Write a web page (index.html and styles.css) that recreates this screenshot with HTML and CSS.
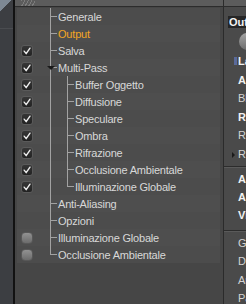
FILE: index.html
```html
<!DOCTYPE html>
<html lang="it">
  <head>
    <meta charset="UTF-8" />
    <title>Render</title>
    <link rel="stylesheet" href="styles.css">
  </head>
  <body>
    <div class="app">
      <!-- barra laterale -->
      <div class="dock"></div>
      <div class="dock-edge"></div>

      <!-- albero delle sezioni -->
      <div class="outline">
        <div class="bar"><span class="grip"></span></div>
        <ul class="tree">
          <li class="row l1"><span class="mark"></span><span class="label">Generale</span></li>
          <li class="row l1 active"><span class="mark"></span><span class="label">Output</span></li>
          <li class="row l1"><span class="mark check"><svg viewBox="0 0 12 12"><path d="M2.6 6.2 L5 9.2 L9.6 2.6" /></svg></span><span class="label">Salva</span></li>
          <li class="row l1"><span class="mark check"><svg viewBox="0 0 12 12"><path d="M2.6 6.2 L5 9.2 L9.6 2.6" /></svg></span><span class="expander"></span><span class="label">Multi-Pass</span></li>
          <li class="row l2"><span class="mark check"><svg viewBox="0 0 12 12"><path d="M2.6 6.2 L5 9.2 L9.6 2.6" /></svg></span><span class="label">Buffer Oggetto</span></li>
          <li class="row l2"><span class="mark check"><svg viewBox="0 0 12 12"><path d="M2.6 6.2 L5 9.2 L9.6 2.6" /></svg></span><span class="label">Diffusione</span></li>
          <li class="row l2"><span class="mark check"><svg viewBox="0 0 12 12"><path d="M2.6 6.2 L5 9.2 L9.6 2.6" /></svg></span><span class="label">Speculare</span></li>
          <li class="row l2"><span class="mark check"><svg viewBox="0 0 12 12"><path d="M2.6 6.2 L5 9.2 L9.6 2.6" /></svg></span><span class="label">Ombra</span></li>
          <li class="row l2"><span class="mark check"><svg viewBox="0 0 12 12"><path d="M2.6 6.2 L5 9.2 L9.6 2.6" /></svg></span><span class="label">Rifrazione</span></li>
          <li class="row l2"><span class="mark check"><svg viewBox="0 0 12 12"><path d="M2.6 6.2 L5 9.2 L9.6 2.6" /></svg></span><span class="label">Occlusione Ambientale</span></li>
          <li class="row l2 last"><span class="mark check"><svg viewBox="0 0 12 12"><path d="M2.6 6.2 L5 9.2 L9.6 2.6" /></svg></span><span class="label">Illuminazione Globale</span></li>
          <li class="row l1"><span class="mark"></span><span class="label">Anti-Aliasing</span></li>
          <li class="row l1"><span class="mark"></span><span class="label">Opzioni</span></li>
          <li class="row l1"><span class="mark off"></span><span class="label">Illuminazione Globale</span></li>
          <li class="row l1 last"><span class="mark off"></span><span class="label">Occlusione Ambientale</span></li>
        </ul>
      </div>

      <!-- pannello proprietà (tagliato) -->
      <div class="props">
        <div class="bar"></div>
        <div class="props-title">Output</div>
        <div class="knob"></div>
        <div class="group first">
          <div class="prop strong"><span class="swatch"></span>Larghezza</div>
          <div class="prop strong">Altezza</div>
          <div class="prop">Blocchi</div>
          <div class="prop strong">Rapporto</div>
          <div class="prop">Risoluzione</div>
          <div class="prop"><span class="arrow"></span>Regione</div>
        </div>
        <div class="sep"></div>
        <div class="group tight">
          <div class="prop strong">Antialias</div>
          <div class="prop strong">Alpha</div>
          <div class="prop strong">Visualizza</div>
        </div>
        <div class="sep lower"></div>
        <div class="group last">
          <div class="prop">Gamma</div>
          <div class="prop">Dither</div>
          <div class="prop">Auto</div>
          <div class="prop">Passi</div>
        </div>
      </div>
    </div>
  </body>
</html>
```

FILE: styles.css
```css
body {
  margin: 0;
  background-color: #454545;
  font-family: "Liberation Sans", Arial, sans-serif;
  font-size: 11px;
}

.app {
  display: flex;
  width: 246px;
  height: 304px;
  overflow: hidden;
}

/* barra laterale a sinistra */
.dock {
  width: 13px;
  flex-shrink: 0;
  background:
    linear-gradient(135deg, #7d8894 0, #7d8894 8px, transparent 8.5px) 0 0 / 13px 13px no-repeat,
    linear-gradient(#4a4c50, #4a4c50) 0 28px / 13px 1px no-repeat,
    #3c3e42;
}

.dock-edge {
  width: 2px;
  flex-shrink: 0;
  background-color: #121212;
}

/* barretta in alto */
.bar {
  height: 6px;
  background-color: #5c5c5c;
  border-bottom: 1px solid #2c2c2c;
}

.grip {
  display: block;
  width: 14px;
  height: 6px;
  margin-left: 6px;
  background: repeating-linear-gradient(-60deg, #5c5c5c 0, #5c5c5c 2px, #7c7c7c 2px, #7c7c7c 3px);
}

.outline {
  width: 208px;
  flex-shrink: 0;
  background-color: #464646;
  border-right: 1px solid #2b2b2b;
}

.tree {
  list-style: none;
  margin: 1px 3px 0 2px;
  padding: 0;
}

.row {
  --g: #a2a2a2;
  height: 17px;
  display: flex;
  align-items: center;
  padding-left: 4px;
  color: #d8d8d8;
  letter-spacing: -0.2px;
  white-space: nowrap;
  background-color: #4c4c4c;
  background-repeat: no-repeat;
}

.row:nth-child(even) {
  background-color: #4e4e4e;
}

/* linee dell'albero */
.l1 {
  background-image: linear-gradient(var(--g), var(--g)), linear-gradient(var(--g), var(--g));
  background-position: 33px 0, 33px 8px;
  background-size: 1px 100%, 7px 1px;
}

.l1.last {
  background-size: 1px 9px, 7px 1px;
}

.l2 {
  background-image: linear-gradient(var(--g), var(--g)), linear-gradient(var(--g), var(--g)), linear-gradient(var(--g), var(--g));
  background-position: 33px 0, 50px 0, 50px 8px;
  background-size: 1px 100%, 1px 100%, 7px 1px;
}

.l2.last {
  background-size: 1px 100%, 1px 9px, 7px 1px;
}

.mark {
  width: 12px;
  height: 12px;
  flex-shrink: 0;
  box-sizing: border-box;
}

.check {
  border: 1px solid #5a5a5a;
  border-radius: 3px;
  background: linear-gradient(#363636, #222);
}

.check svg {
  display: block;
  width: 10px;
  height: 10px;
}

.check path {
  fill: none;
  stroke: #ececec;
  stroke-width: 1.7;
  stroke-linecap: round;
  stroke-linejoin: round;
}

.off {
  border: 1px solid #585858;
  border-radius: 4px;
  background: linear-gradient(#929292, #6c6c6c);
}

.label {
  margin-left: 25px;
}

.l2 .label {
  margin-left: 42px;
}

.active .label {
  color: #f4a623;
}

.expander {
  width: 0;
  height: 0;
  margin-left: 14px;
  margin-top: 1px;
  border-left: 4px solid transparent;
  border-right: 4px solid transparent;
  border-top: 4px solid #1a1a1a;
}

.expander + .label {
  margin-left: 3px;
}

/* pannello proprietà */
.props {
  flex: 1;
  min-width: 0;
  background-color: #4a4a4a;
  color: #d4d4d4;
  white-space: nowrap;
}

.props-title {
  margin: 9px 0 0 4px;
  height: 12px;
  line-height: 12px;
  padding-left: 1px;
  background-color: #262626;
  color: #f2f2f2;
  font-weight: bold;
}

.knob {
  width: 17px;
  height: 17px;
  margin: 5px 0 0 15px;
  border-radius: 50%;
  background: linear-gradient(#a4a4a4, #6e6e6e);
}

.group {
  margin-top: 2px;
}

.group.last {
  margin-top: 1.5px;
}

.prop {
  height: 18.5px;
  line-height: 18.5px;
  padding-left: 14px;
}

.tight .prop {
  height: 18px;
  line-height: 18px;
}

.strong {
  color: #f2f2f2;
  font-weight: bold;
}

.swatch {
  display: inline-block;
  width: 3px;
  height: 8px;
  margin-left: -4px;
  margin-right: 1px;
  background-color: #5a6a9a;
}

.arrow {
  display: inline-block;
  width: 0;
  height: 0;
  margin-left: -6px;
  margin-right: 3px;
  border-top: 3px solid transparent;
  border-bottom: 3px solid transparent;
  border-left: 3px solid #1a1a1a;
}

.sep {
  margin-top: 3px;
  height: 1px;
  background-color: #2c2c2c;
  border-bottom: 1px solid #5a5a5a;
}

.sep.lower {
  margin-top: 6px;
}
```
